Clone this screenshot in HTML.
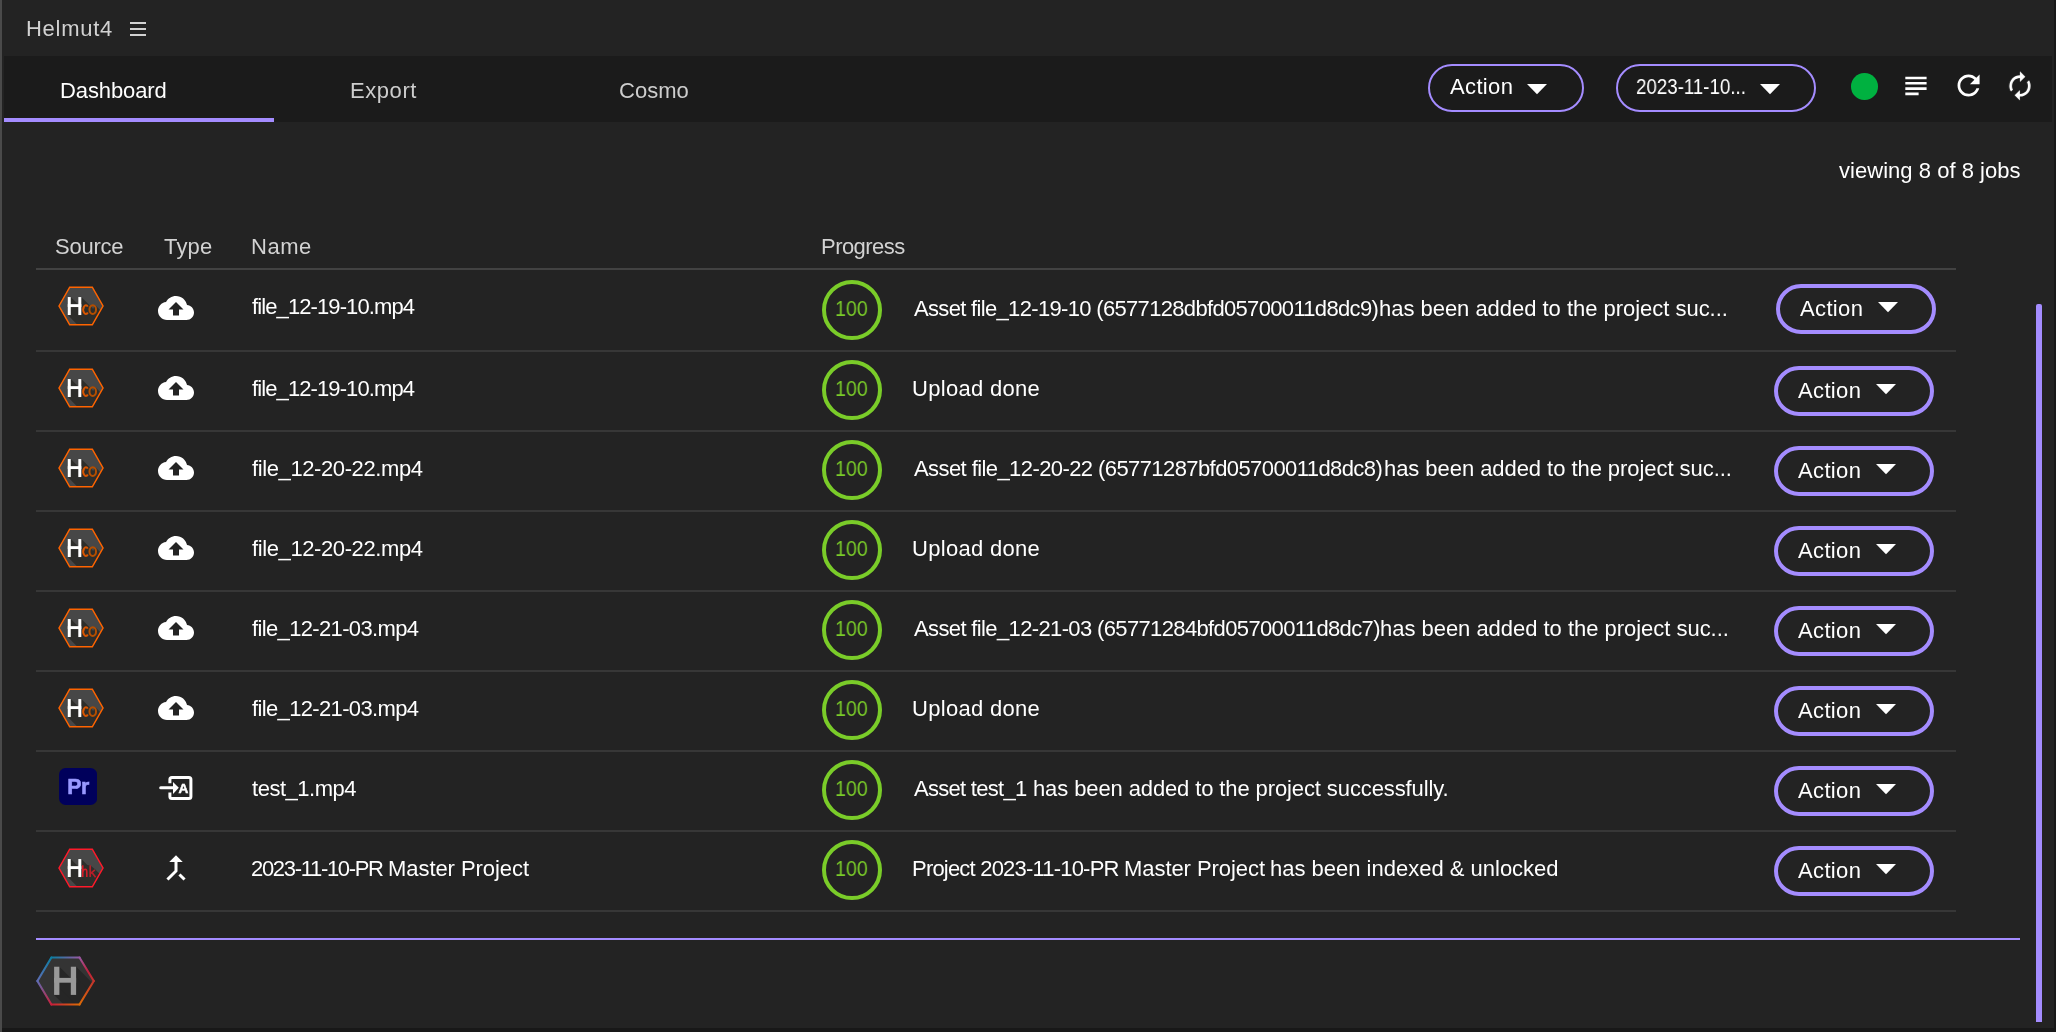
<!DOCTYPE html>
<html><head><meta charset="utf-8"><title>Helmut4</title>
<style>
html,body{margin:0;padding:0}
body{width:2056px;height:1032px;background:#232323;position:relative;overflow:hidden;font-family:"Liberation Sans",sans-serif}
.a{position:absolute;display:block;will-change:transform}
.t{position:absolute;white-space:nowrap;display:block;will-change:transform}
</style></head><body>

<div class="a" style="left:0;top:0;width:2px;height:1032px;background:#4a4a4a"></div>
<div class="a" style="left:2054px;top:0;width:2px;height:1032px;background:#181818"></div>
<div class="a" style="left:2px;top:1028px;width:2054px;height:4px;background:#181818"></div>
<span class="t" style="left:25.56px;top:18.38px;font-size:22px;line-height:22px;color:#d2d2d2;letter-spacing:0.722px;font-weight:normal;">Helmut4</span>
<div class="a" style="left:130px;top:22px;width:16px;height:2px;background:#d2d2d2"></div>
<div class="a" style="left:130px;top:28px;width:16px;height:2px;background:#d2d2d2"></div>
<div class="a" style="left:130px;top:34px;width:16px;height:2px;background:#d2d2d2"></div>
<div class="a" style="left:4px;top:56px;width:2048px;height:66px;background:#1b1b1b"></div>
<div class="a" style="left:4px;top:118px;width:270px;height:4px;background:#a48cff"></div>
<span class="t" style="left:60.22px;top:80.38px;font-size:22px;line-height:22px;color:#ffffff;letter-spacing:-0.106px;font-weight:normal;">Dashboard</span>
<span class="t" style="left:349.94px;top:80.38px;font-size:22px;line-height:22px;color:#cdcdcd;letter-spacing:0.564px;font-weight:normal;">Export</span>
<span class="t" style="left:618.57px;top:80.38px;font-size:22px;line-height:22px;color:#cdcdcd;letter-spacing:0.017px;font-weight:normal;">Cosmo</span>
<div class="a" style="left:1428px;top:64px;width:152px;height:44px;border:2px solid #a48cff;border-radius:24.0px;background:#1b1b1b"></div><span class="t" style="left:1450.2px;top:76.38px;font-size:22px;line-height:22px;color:#ffffff;letter-spacing:0.36px;font-weight:normal;">Action</span><svg class="a" style="left:1527px;top:84px" width="20" height="11" viewBox="0 0 20 11"><polygon points="0,0 20,0 10,10.3" fill="#fff"/></svg>
<div class="a" style="left:1616px;top:64px;width:196px;height:44px;border:2px solid #a48cff;border-radius:24.0px;background:#1b1b1b"></div><span class="t" style="left:1636px;top:76.38px;font-size:22px;line-height:22px;color:#ffffff;letter-spacing:0px;font-weight:normal;transform:scaleX(0.85);transform-origin:0 0;">2023-11-10...</span><svg class="a" style="left:1760px;top:84px" width="20" height="11" viewBox="0 0 20 11"><polygon points="0,0 20,0 10,10.3" fill="#fff"/></svg>
<div class="a" style="left:1850.7px;top:72.6px;width:26.6px;height:26.6px;border-radius:50%;background:#00b140"></div>
<svg class="a" style="left:1899.80px;top:69.85px;" width="31.92" height="31.92" viewBox="0 0 24 24"><path d="M14 17H4v2h10v-2zm6-8H4v2h16V9zM4 15h16v-2H4v2zM4 5v2h16V5H4z" fill="#fff"/></svg>
<svg class="a" style="left:1951.50px;top:69.40px;" width="33.12" height="33.12" viewBox="0 0 24 24"><path d="M17.65 6.35C16.2 4.9 14.21 4 12 4c-4.42 0-7.99 3.58-7.99 8s3.57 8 7.99 8c3.73 0 6.84-2.55 7.73-6h-2.08c-.82 2.33-3.04 4-5.65 4-3.31 0-6-2.69-6-6s2.69-6 6-6c1.66 0 3.14.69 4.22 1.78L13 11h7V4l-2.35 2.35z" fill="#fff"/></svg>
<svg class="a" style="left:2004.10px;top:69.90px;transform:scaleX(-1);" width="31.92" height="31.92" viewBox="0 0 24 24"><path d="M12 4V1L8 5l4 4V6c3.31 0 6 2.69 6 6 0 1.01-.25 1.97-.7 2.8l1.46 1.46C19.54 15.03 20 13.57 20 12c0-4.42-3.58-8-8-8zm0 14c-3.31 0-6-2.69-6-6 0-1.01.25-1.97.7-2.8L5.24 7.74C4.46 8.97 4 10.43 4 12c0 4.42 3.58 8 8 8v3l4-4-4-4v3z" fill="#fff"/></svg>
<span class="t" style="left:1838.57px;top:160.38px;font-size:22px;line-height:22px;color:#ffffff;letter-spacing:0.03px;font-weight:normal;">viewing 8 of 8 jobs</span>
<span class="t" style="left:54.88px;top:236.38px;font-size:22px;line-height:22px;color:#d2d2d2;letter-spacing:-0.244px;font-weight:normal;">Source</span>
<span class="t" style="left:163.65px;top:236.38px;font-size:22px;line-height:22px;color:#d2d2d2;letter-spacing:0.169px;font-weight:normal;">Type</span>
<span class="t" style="left:250.94px;top:236.38px;font-size:22px;line-height:22px;color:#d2d2d2;letter-spacing:0.542px;font-weight:normal;">Name</span>
<span class="t" style="left:821.17px;top:236.38px;font-size:22px;line-height:22px;color:#d2d2d2;letter-spacing:-0.542px;font-weight:normal;">Progress</span>
<div class="a" style="left:36px;top:268px;width:1920px;height:2px;background:#424242"></div>
<div class="a" style="left:36px;top:350px;width:1920px;height:2px;background:#373737"></div>
<svg class="a" style="left:50.95px;top:275.85px" width="60" height="60" viewBox="0 0 60 60">
<defs><clipPath id="c80_305"><polygon points="8.0,30 18.7,11.2 41.3,11.2 52.0,30 41.3,48.8 18.7,48.8"/></clipPath></defs>
<polygon points="8.0,30 18.7,11.2 41.3,11.2 52.0,30 41.3,48.8 18.7,48.8" fill="#474747"/>
<g clip-path="url(#c80_305)"><polygon points="16.75,21.05 19.75,21.05 99.75,101.05 96.75,119.05 16.75,39.05" fill="#2d2d2a"/><polygon points="27.3,21.05 30.3,21.05 110.3,101.05 107.3,119.05 27.3,39.05" fill="#2d2d2a"/><polygon points="16.75,28.15 30.3,28.15 110.3,108.15 96.75,111.05 16.75,31.05" fill="#2d2d2a"/><polygon points="44.41,29.32 104.41,89.32 99.09,97.88 39.09,37.88" fill="#2d2d2a"/></g>
<polygon points="8.0,30 18.7,11.2 41.3,11.2 52.0,30 41.3,48.8 18.7,48.8" fill="none" stroke="#ff6400" stroke-width="1.5" stroke-linejoin="miter"/>
<rect x="16.75" y="21.05" width="3.0" height="18" fill="#fff"/>
<rect x="27.3" y="21.05" width="3.0" height="18" fill="#fff"/>
<rect x="16.75" y="28.15" width="13.55" height="2.9" fill="#fff"/>
<path d="M36.83,30.62 A2.6,4.45 0 1 0 36.83,36.58" fill="none" stroke="#d85600" stroke-width="2"/><ellipse cx="41.75" cy="33.6" rx="3.3" ry="4.45" fill="none" stroke="#b44e00" stroke-width="2"/></svg>
<svg class="a" style="left:158.00px;top:290.00px;" width="36.00" height="36.00" viewBox="0 0 24 24"><path d="M19.35 10.04C18.67 6.59 15.64 4 12 4 9.11 4 6.6 5.64 5.35 8.04 2.34 8.36 0 10.91 0 14c0 3.31 2.69 6 6 6h13c2.76 0 5-2.24 5-5 0-2.64-2.05-4.78-4.65-4.96zM14 13v4h-4v-4H7l5-5 5 5h-3z" fill="#fff"/></svg>
<span class="t" style="left:252.19px;top:296.18px;font-size:22px;line-height:22px;color:#ffffff;letter-spacing:-0.894px;font-weight:normal;">file_12-19-10.mp4</span>
<span class="t" style="left:913.57px;top:298.38px;font-size:22px;line-height:22px;color:#ffffff;letter-spacing:-0.671px;font-weight:normal;">Asset file_12-19-10 (6577128dbfd05700011d8dc9)</span>
<span class="t" style="left:1379.11px;top:298.38px;font-size:22px;line-height:22px;color:#ffffff;letter-spacing:-0.026px;font-weight:normal;">has been added to the project suc...</span>
<div class="a" style="left:822px;top:280px;width:52px;height:52px;border:4px solid #7acc29;border-radius:50%"></div>
<span class="t" style="left:834.91px;top:298.38px;font-size:22px;line-height:22px;color:#7acc29;letter-spacing:0px;font-weight:normal;transform:scaleX(0.893);transform-origin:0 0;">100</span>
<div class="a" style="left:1776px;top:284px;width:152px;height:42px;border:4px solid #a48cff;border-radius:25.0px;background:transparent"></div><span class="t" style="left:1800.4px;top:298.48px;font-size:22px;line-height:22px;color:#ffffff;letter-spacing:0.36px;font-weight:normal;">Action</span><svg class="a" style="left:1877.5px;top:302px" width="20" height="11" viewBox="0 0 20 11"><polygon points="0,0 20,0 10,10.3" fill="#fff"/></svg>
<div class="a" style="left:36px;top:430px;width:1920px;height:2px;background:#373737"></div>
<svg class="a" style="left:50.95px;top:357.75px" width="60" height="60" viewBox="0 0 60 60">
<defs><clipPath id="c80_387"><polygon points="8.0,30 18.7,11.2 41.3,11.2 52.0,30 41.3,48.8 18.7,48.8"/></clipPath></defs>
<polygon points="8.0,30 18.7,11.2 41.3,11.2 52.0,30 41.3,48.8 18.7,48.8" fill="#474747"/>
<g clip-path="url(#c80_387)"><polygon points="16.75,21.05 19.75,21.05 99.75,101.05 96.75,119.05 16.75,39.05" fill="#2d2d2a"/><polygon points="27.3,21.05 30.3,21.05 110.3,101.05 107.3,119.05 27.3,39.05" fill="#2d2d2a"/><polygon points="16.75,28.15 30.3,28.15 110.3,108.15 96.75,111.05 16.75,31.05" fill="#2d2d2a"/><polygon points="44.41,29.32 104.41,89.32 99.09,97.88 39.09,37.88" fill="#2d2d2a"/></g>
<polygon points="8.0,30 18.7,11.2 41.3,11.2 52.0,30 41.3,48.8 18.7,48.8" fill="none" stroke="#ff6400" stroke-width="1.5" stroke-linejoin="miter"/>
<rect x="16.75" y="21.05" width="3.0" height="18" fill="#fff"/>
<rect x="27.3" y="21.05" width="3.0" height="18" fill="#fff"/>
<rect x="16.75" y="28.15" width="13.55" height="2.9" fill="#fff"/>
<path d="M36.83,30.62 A2.6,4.45 0 1 0 36.83,36.58" fill="none" stroke="#d85600" stroke-width="2"/><ellipse cx="41.75" cy="33.6" rx="3.3" ry="4.45" fill="none" stroke="#b44e00" stroke-width="2"/></svg>
<svg class="a" style="left:158.00px;top:370.00px;" width="36.00" height="36.00" viewBox="0 0 24 24"><path d="M19.35 10.04C18.67 6.59 15.64 4 12 4 9.11 4 6.6 5.64 5.35 8.04 2.34 8.36 0 10.91 0 14c0 3.31 2.69 6 6 6h13c2.76 0 5-2.24 5-5 0-2.64-2.05-4.78-4.65-4.96zM14 13v4h-4v-4H7l5-5 5 5h-3z" fill="#fff"/></svg>
<span class="t" style="left:252.19px;top:378.18px;font-size:22px;line-height:22px;color:#ffffff;letter-spacing:-0.894px;font-weight:normal;">file_12-19-10.mp4</span>
<span class="t" style="left:911.92px;top:378.38px;font-size:22px;line-height:22px;color:#ffffff;letter-spacing:0.307px;font-weight:normal;">Upload done</span>
<div class="a" style="left:822px;top:360px;width:52px;height:52px;border:4px solid #7acc29;border-radius:50%"></div>
<span class="t" style="left:834.91px;top:378.38px;font-size:22px;line-height:22px;color:#7acc29;letter-spacing:0px;font-weight:normal;transform:scaleX(0.893);transform-origin:0 0;">100</span>
<div class="a" style="left:1774px;top:366px;width:152px;height:42px;border:4px solid #a48cff;border-radius:25.0px;background:transparent"></div><span class="t" style="left:1798.4px;top:380.48px;font-size:22px;line-height:22px;color:#ffffff;letter-spacing:0.36px;font-weight:normal;">Action</span><svg class="a" style="left:1875.5px;top:384px" width="20" height="11" viewBox="0 0 20 11"><polygon points="0,0 20,0 10,10.3" fill="#fff"/></svg>
<div class="a" style="left:36px;top:510px;width:1920px;height:2px;background:#373737"></div>
<svg class="a" style="left:50.95px;top:437.75px" width="60" height="60" viewBox="0 0 60 60">
<defs><clipPath id="c80_467"><polygon points="8.0,30 18.7,11.2 41.3,11.2 52.0,30 41.3,48.8 18.7,48.8"/></clipPath></defs>
<polygon points="8.0,30 18.7,11.2 41.3,11.2 52.0,30 41.3,48.8 18.7,48.8" fill="#474747"/>
<g clip-path="url(#c80_467)"><polygon points="16.75,21.05 19.75,21.05 99.75,101.05 96.75,119.05 16.75,39.05" fill="#2d2d2a"/><polygon points="27.3,21.05 30.3,21.05 110.3,101.05 107.3,119.05 27.3,39.05" fill="#2d2d2a"/><polygon points="16.75,28.15 30.3,28.15 110.3,108.15 96.75,111.05 16.75,31.05" fill="#2d2d2a"/><polygon points="44.41,29.32 104.41,89.32 99.09,97.88 39.09,37.88" fill="#2d2d2a"/></g>
<polygon points="8.0,30 18.7,11.2 41.3,11.2 52.0,30 41.3,48.8 18.7,48.8" fill="none" stroke="#ff6400" stroke-width="1.5" stroke-linejoin="miter"/>
<rect x="16.75" y="21.05" width="3.0" height="18" fill="#fff"/>
<rect x="27.3" y="21.05" width="3.0" height="18" fill="#fff"/>
<rect x="16.75" y="28.15" width="13.55" height="2.9" fill="#fff"/>
<path d="M36.83,30.62 A2.6,4.45 0 1 0 36.83,36.58" fill="none" stroke="#d85600" stroke-width="2"/><ellipse cx="41.75" cy="33.6" rx="3.3" ry="4.45" fill="none" stroke="#b44e00" stroke-width="2"/></svg>
<svg class="a" style="left:158.00px;top:450.00px;" width="36.00" height="36.00" viewBox="0 0 24 24"><path d="M19.35 10.04C18.67 6.59 15.64 4 12 4 9.11 4 6.6 5.64 5.35 8.04 2.34 8.36 0 10.91 0 14c0 3.31 2.69 6 6 6h13c2.76 0 5-2.24 5-5 0-2.64-2.05-4.78-4.65-4.96zM14 13v4h-4v-4H7l5-5 5 5h-3z" fill="#fff"/></svg>
<span class="t" style="left:251.88px;top:458.18px;font-size:22px;line-height:22px;color:#ffffff;letter-spacing:-0.394px;font-weight:normal;">file_12-20-22.mp4</span>
<span class="t" style="left:913.57px;top:458.38px;font-size:22px;line-height:22px;color:#ffffff;letter-spacing:-0.583px;font-weight:normal;">Asset file_12-20-22 (65771287bfd05700011d8dc8)</span>
<span class="t" style="left:1383.88px;top:458.38px;font-size:22px;line-height:22px;color:#ffffff;letter-spacing:-0.055px;font-weight:normal;">has been added to the project suc...</span>
<div class="a" style="left:822px;top:440px;width:52px;height:52px;border:4px solid #7acc29;border-radius:50%"></div>
<span class="t" style="left:834.91px;top:458.38px;font-size:22px;line-height:22px;color:#7acc29;letter-spacing:0px;font-weight:normal;transform:scaleX(0.893);transform-origin:0 0;">100</span>
<div class="a" style="left:1774px;top:446px;width:152px;height:42px;border:4px solid #a48cff;border-radius:25.0px;background:transparent"></div><span class="t" style="left:1798.4px;top:460.48px;font-size:22px;line-height:22px;color:#ffffff;letter-spacing:0.36px;font-weight:normal;">Action</span><svg class="a" style="left:1875.5px;top:464px" width="20" height="11" viewBox="0 0 20 11"><polygon points="0,0 20,0 10,10.3" fill="#fff"/></svg>
<div class="a" style="left:36px;top:590px;width:1920px;height:2px;background:#373737"></div>
<svg class="a" style="left:50.95px;top:517.75px" width="60" height="60" viewBox="0 0 60 60">
<defs><clipPath id="c80_547"><polygon points="8.0,30 18.7,11.2 41.3,11.2 52.0,30 41.3,48.8 18.7,48.8"/></clipPath></defs>
<polygon points="8.0,30 18.7,11.2 41.3,11.2 52.0,30 41.3,48.8 18.7,48.8" fill="#474747"/>
<g clip-path="url(#c80_547)"><polygon points="16.75,21.05 19.75,21.05 99.75,101.05 96.75,119.05 16.75,39.05" fill="#2d2d2a"/><polygon points="27.3,21.05 30.3,21.05 110.3,101.05 107.3,119.05 27.3,39.05" fill="#2d2d2a"/><polygon points="16.75,28.15 30.3,28.15 110.3,108.15 96.75,111.05 16.75,31.05" fill="#2d2d2a"/><polygon points="44.41,29.32 104.41,89.32 99.09,97.88 39.09,37.88" fill="#2d2d2a"/></g>
<polygon points="8.0,30 18.7,11.2 41.3,11.2 52.0,30 41.3,48.8 18.7,48.8" fill="none" stroke="#ff6400" stroke-width="1.5" stroke-linejoin="miter"/>
<rect x="16.75" y="21.05" width="3.0" height="18" fill="#fff"/>
<rect x="27.3" y="21.05" width="3.0" height="18" fill="#fff"/>
<rect x="16.75" y="28.15" width="13.55" height="2.9" fill="#fff"/>
<path d="M36.83,30.62 A2.6,4.45 0 1 0 36.83,36.58" fill="none" stroke="#d85600" stroke-width="2"/><ellipse cx="41.75" cy="33.6" rx="3.3" ry="4.45" fill="none" stroke="#b44e00" stroke-width="2"/></svg>
<svg class="a" style="left:158.00px;top:530.00px;" width="36.00" height="36.00" viewBox="0 0 24 24"><path d="M19.35 10.04C18.67 6.59 15.64 4 12 4 9.11 4 6.6 5.64 5.35 8.04 2.34 8.36 0 10.91 0 14c0 3.31 2.69 6 6 6h13c2.76 0 5-2.24 5-5 0-2.64-2.05-4.78-4.65-4.96zM14 13v4h-4v-4H7l5-5 5 5h-3z" fill="#fff"/></svg>
<span class="t" style="left:251.88px;top:538.18px;font-size:22px;line-height:22px;color:#ffffff;letter-spacing:-0.394px;font-weight:normal;">file_12-20-22.mp4</span>
<span class="t" style="left:911.92px;top:538.38px;font-size:22px;line-height:22px;color:#ffffff;letter-spacing:0.307px;font-weight:normal;">Upload done</span>
<div class="a" style="left:822px;top:520px;width:52px;height:52px;border:4px solid #7acc29;border-radius:50%"></div>
<span class="t" style="left:834.91px;top:538.38px;font-size:22px;line-height:22px;color:#7acc29;letter-spacing:0px;font-weight:normal;transform:scaleX(0.893);transform-origin:0 0;">100</span>
<div class="a" style="left:1774px;top:526px;width:152px;height:42px;border:4px solid #a48cff;border-radius:25.0px;background:transparent"></div><span class="t" style="left:1798.4px;top:540.48px;font-size:22px;line-height:22px;color:#ffffff;letter-spacing:0.36px;font-weight:normal;">Action</span><svg class="a" style="left:1875.5px;top:544px" width="20" height="11" viewBox="0 0 20 11"><polygon points="0,0 20,0 10,10.3" fill="#fff"/></svg>
<div class="a" style="left:36px;top:670px;width:1920px;height:2px;background:#373737"></div>
<svg class="a" style="left:50.95px;top:597.75px" width="60" height="60" viewBox="0 0 60 60">
<defs><clipPath id="c80_627"><polygon points="8.0,30 18.7,11.2 41.3,11.2 52.0,30 41.3,48.8 18.7,48.8"/></clipPath></defs>
<polygon points="8.0,30 18.7,11.2 41.3,11.2 52.0,30 41.3,48.8 18.7,48.8" fill="#474747"/>
<g clip-path="url(#c80_627)"><polygon points="16.75,21.05 19.75,21.05 99.75,101.05 96.75,119.05 16.75,39.05" fill="#2d2d2a"/><polygon points="27.3,21.05 30.3,21.05 110.3,101.05 107.3,119.05 27.3,39.05" fill="#2d2d2a"/><polygon points="16.75,28.15 30.3,28.15 110.3,108.15 96.75,111.05 16.75,31.05" fill="#2d2d2a"/><polygon points="44.41,29.32 104.41,89.32 99.09,97.88 39.09,37.88" fill="#2d2d2a"/></g>
<polygon points="8.0,30 18.7,11.2 41.3,11.2 52.0,30 41.3,48.8 18.7,48.8" fill="none" stroke="#ff6400" stroke-width="1.5" stroke-linejoin="miter"/>
<rect x="16.75" y="21.05" width="3.0" height="18" fill="#fff"/>
<rect x="27.3" y="21.05" width="3.0" height="18" fill="#fff"/>
<rect x="16.75" y="28.15" width="13.55" height="2.9" fill="#fff"/>
<path d="M36.83,30.62 A2.6,4.45 0 1 0 36.83,36.58" fill="none" stroke="#d85600" stroke-width="2"/><ellipse cx="41.75" cy="33.6" rx="3.3" ry="4.45" fill="none" stroke="#b44e00" stroke-width="2"/></svg>
<svg class="a" style="left:158.00px;top:610.00px;" width="36.00" height="36.00" viewBox="0 0 24 24"><path d="M19.35 10.04C18.67 6.59 15.64 4 12 4 9.11 4 6.6 5.64 5.35 8.04 2.34 8.36 0 10.91 0 14c0 3.31 2.69 6 6 6h13c2.76 0 5-2.24 5-5 0-2.64-2.05-4.78-4.65-4.96zM14 13v4h-4v-4H7l5-5 5 5h-3z" fill="#fff"/></svg>
<span class="t" style="left:252.19px;top:618.18px;font-size:22px;line-height:22px;color:#ffffff;letter-spacing:-0.644px;font-weight:normal;">file_12-21-03.mp4</span>
<span class="t" style="left:913.57px;top:618.38px;font-size:22px;line-height:22px;color:#ffffff;letter-spacing:-0.633px;font-weight:normal;">Asset file_12-21-03 (65771284bfd05700011d8dc7)</span>
<span class="t" style="left:1380.26px;top:618.38px;font-size:22px;line-height:22px;color:#ffffff;letter-spacing:-0.026px;font-weight:normal;">has been added to the project suc...</span>
<div class="a" style="left:822px;top:600px;width:52px;height:52px;border:4px solid #7acc29;border-radius:50%"></div>
<span class="t" style="left:834.91px;top:618.38px;font-size:22px;line-height:22px;color:#7acc29;letter-spacing:0px;font-weight:normal;transform:scaleX(0.893);transform-origin:0 0;">100</span>
<div class="a" style="left:1774px;top:606px;width:152px;height:42px;border:4px solid #a48cff;border-radius:25.0px;background:transparent"></div><span class="t" style="left:1798.4px;top:620.48px;font-size:22px;line-height:22px;color:#ffffff;letter-spacing:0.36px;font-weight:normal;">Action</span><svg class="a" style="left:1875.5px;top:624px" width="20" height="11" viewBox="0 0 20 11"><polygon points="0,0 20,0 10,10.3" fill="#fff"/></svg>
<div class="a" style="left:36px;top:750px;width:1920px;height:2px;background:#373737"></div>
<svg class="a" style="left:50.95px;top:677.75px" width="60" height="60" viewBox="0 0 60 60">
<defs><clipPath id="c80_707"><polygon points="8.0,30 18.7,11.2 41.3,11.2 52.0,30 41.3,48.8 18.7,48.8"/></clipPath></defs>
<polygon points="8.0,30 18.7,11.2 41.3,11.2 52.0,30 41.3,48.8 18.7,48.8" fill="#474747"/>
<g clip-path="url(#c80_707)"><polygon points="16.75,21.05 19.75,21.05 99.75,101.05 96.75,119.05 16.75,39.05" fill="#2d2d2a"/><polygon points="27.3,21.05 30.3,21.05 110.3,101.05 107.3,119.05 27.3,39.05" fill="#2d2d2a"/><polygon points="16.75,28.15 30.3,28.15 110.3,108.15 96.75,111.05 16.75,31.05" fill="#2d2d2a"/><polygon points="44.41,29.32 104.41,89.32 99.09,97.88 39.09,37.88" fill="#2d2d2a"/></g>
<polygon points="8.0,30 18.7,11.2 41.3,11.2 52.0,30 41.3,48.8 18.7,48.8" fill="none" stroke="#ff6400" stroke-width="1.5" stroke-linejoin="miter"/>
<rect x="16.75" y="21.05" width="3.0" height="18" fill="#fff"/>
<rect x="27.3" y="21.05" width="3.0" height="18" fill="#fff"/>
<rect x="16.75" y="28.15" width="13.55" height="2.9" fill="#fff"/>
<path d="M36.83,30.62 A2.6,4.45 0 1 0 36.83,36.58" fill="none" stroke="#d85600" stroke-width="2"/><ellipse cx="41.75" cy="33.6" rx="3.3" ry="4.45" fill="none" stroke="#b44e00" stroke-width="2"/></svg>
<svg class="a" style="left:158.00px;top:690.00px;" width="36.00" height="36.00" viewBox="0 0 24 24"><path d="M19.35 10.04C18.67 6.59 15.64 4 12 4 9.11 4 6.6 5.64 5.35 8.04 2.34 8.36 0 10.91 0 14c0 3.31 2.69 6 6 6h13c2.76 0 5-2.24 5-5 0-2.64-2.05-4.78-4.65-4.96zM14 13v4h-4v-4H7l5-5 5 5h-3z" fill="#fff"/></svg>
<span class="t" style="left:252.19px;top:698.18px;font-size:22px;line-height:22px;color:#ffffff;letter-spacing:-0.644px;font-weight:normal;">file_12-21-03.mp4</span>
<span class="t" style="left:911.92px;top:698.38px;font-size:22px;line-height:22px;color:#ffffff;letter-spacing:0.307px;font-weight:normal;">Upload done</span>
<div class="a" style="left:822px;top:680px;width:52px;height:52px;border:4px solid #7acc29;border-radius:50%"></div>
<span class="t" style="left:834.91px;top:698.38px;font-size:22px;line-height:22px;color:#7acc29;letter-spacing:0px;font-weight:normal;transform:scaleX(0.893);transform-origin:0 0;">100</span>
<div class="a" style="left:1774px;top:686px;width:152px;height:42px;border:4px solid #a48cff;border-radius:25.0px;background:transparent"></div><span class="t" style="left:1798.4px;top:700.48px;font-size:22px;line-height:22px;color:#ffffff;letter-spacing:0.36px;font-weight:normal;">Action</span><svg class="a" style="left:1875.5px;top:704px" width="20" height="11" viewBox="0 0 20 11"><polygon points="0,0 20,0 10,10.3" fill="#fff"/></svg>
<div class="a" style="left:36px;top:830px;width:1920px;height:2px;background:#373737"></div>
<svg class="a" style="left:59px;top:768.4px" width="38.1" height="37" viewBox="0 0 38.1 37"><rect x="0" y="0" width="38.1" height="37" rx="6.5" fill="#00005b"/><text x="0" y="0" transform="translate(8.2,25.6) scale(0.93,1)" font-family="Liberation Sans" font-weight="bold" font-size="23" fill="#9999ff" stroke="#9999ff" stroke-width="0.6" letter-spacing="-0.4">Pr</text></svg>
<svg class="a" style="left:150px;top:765px" width="50" height="50" viewBox="0 0 50 50">
<path d="M19.9 18.2 V14.4 Q19.9 12.4 21.9 12.4 H38.9 Q40.9 12.4 40.9 14.4 V31.4 Q40.9 33.4 38.9 33.4 H21.9 Q19.9 33.4 19.9 31.4 V27.6" fill="none" stroke="#fff" stroke-width="3"/>
<line x1="10.7" y1="22.8" x2="24" y2="22.8" stroke="#fff" stroke-width="3" stroke-linecap="round"/>
<polygon points="23,17 28.8,22.8 23,29.1" fill="#fff"/>
<text x="28.4" y="27.9" font-family="Liberation Sans" font-weight="bold" font-size="13.6" fill="#fff" stroke="#fff" stroke-width="0.5">A</text>
</svg>
<span class="t" style="left:252.19px;top:778.18px;font-size:22px;line-height:22px;color:#ffffff;letter-spacing:-0.474px;font-weight:normal;">test_1.mp4</span>
<span class="t" style="left:913.57px;top:778.38px;font-size:22px;line-height:22px;color:#ffffff;letter-spacing:-0.713px;font-weight:normal;">Asset test_1</span>
<span class="t" style="left:1032.65px;top:778.38px;font-size:22px;line-height:22px;color:#ffffff;letter-spacing:-0.112px;font-weight:normal;">has been added to the project successfully.</span>
<div class="a" style="left:822px;top:760px;width:52px;height:52px;border:4px solid #7acc29;border-radius:50%"></div>
<span class="t" style="left:834.91px;top:778.38px;font-size:22px;line-height:22px;color:#7acc29;letter-spacing:0px;font-weight:normal;transform:scaleX(0.893);transform-origin:0 0;">100</span>
<div class="a" style="left:1774px;top:766px;width:152px;height:42px;border:4px solid #a48cff;border-radius:25.0px;background:transparent"></div><span class="t" style="left:1798.4px;top:780.48px;font-size:22px;line-height:22px;color:#ffffff;letter-spacing:0.36px;font-weight:normal;">Action</span><svg class="a" style="left:1875.5px;top:784px" width="20" height="11" viewBox="0 0 20 11"><polygon points="0,0 20,0 10,10.3" fill="#fff"/></svg>
<div class="a" style="left:36px;top:910px;width:1920px;height:2px;background:#373737"></div>
<svg class="a" style="left:50.95px;top:837.75px" width="60" height="60" viewBox="0 0 60 60">
<defs><clipPath id="c80_867"><polygon points="8.0,30 18.7,11.2 41.3,11.2 52.0,30 41.3,48.8 18.7,48.8"/></clipPath></defs>
<polygon points="8.0,30 18.7,11.2 41.3,11.2 52.0,30 41.3,48.8 18.7,48.8" fill="#474747"/>
<g clip-path="url(#c80_867)"><polygon points="16.75,21.05 19.75,21.05 99.75,101.05 96.75,119.05 16.75,39.05" fill="#2d2d2a"/><polygon points="27.3,21.05 30.3,21.05 110.3,101.05 107.3,119.05 27.3,39.05" fill="#2d2d2a"/><polygon points="16.75,28.15 30.3,28.15 110.3,108.15 96.75,111.05 16.75,31.05" fill="#2d2d2a"/><polygon points="31.0,27.3 39.2,27.3 44.2,31.5 104.2,91.5 91.0,99.0 31.0,39.0" fill="#2d2d2a"/></g>
<polygon points="8.0,30 18.7,11.2 41.3,11.2 52.0,30 41.3,48.8 18.7,48.8" fill="none" stroke="#ff1a2a" stroke-width="1.5" stroke-linejoin="miter"/>
<rect x="16.75" y="21.05" width="3.0" height="18" fill="#fff"/>
<rect x="27.3" y="21.05" width="3.0" height="18" fill="#fff"/>
<rect x="16.75" y="28.15" width="13.55" height="2.9" fill="#fff"/>
<path d="M31.75,27.3 V39.0 M31.75,34.3 Q32.4,31.2 34.2,31.2 Q35.8,31.2 35.8,33.8 V39.0" fill="none" stroke="#d21c28" stroke-width="1.6"/><path d="M39.2,27.3 V39.0 M43.9,31.8 L39.4,35.6 M40.9,34.4 L44.6,39.2" fill="none" stroke="#b81e28" stroke-width="1.7"/></svg>
<svg class="a" style="left:158.10px;top:850.00px;" width="36.00" height="36.00" viewBox="0 0 24 24"><path d="M17 20.41L18.41 19 15 15.59 13.59 17 17 20.41zM7.5 8H11v5.59L5.59 19 7 20.41l6-6V8h3.5L12 3.5 7.5 8z" fill="#fff"/></svg>
<span class="t" style="left:251.19px;top:858.18px;font-size:22px;line-height:22px;color:#ffffff;letter-spacing:-1.316px;font-weight:normal;">2023-11-10-PR</span>
<span class="t" style="left:387.84px;top:858.18px;font-size:22px;line-height:22px;color:#ffffff;letter-spacing:-0.061px;font-weight:normal;">Master Project</span>
<span class="t" style="left:912.38px;top:858.38px;font-size:22px;line-height:22px;color:#ffffff;letter-spacing:-0.798px;font-weight:normal;">Project 2023-11-10-PR</span>
<span class="t" style="left:1123.61px;top:858.38px;font-size:22px;line-height:22px;color:#ffffff;letter-spacing:-0.061px;font-weight:normal;">Master Project</span>
<span class="t" style="left:1270.19px;top:858.38px;font-size:22px;line-height:22px;color:#ffffff;letter-spacing:-0.003px;font-weight:normal;">has been indexed &amp; unlocked</span>
<div class="a" style="left:822px;top:840px;width:52px;height:52px;border:4px solid #7acc29;border-radius:50%"></div>
<span class="t" style="left:834.91px;top:858.38px;font-size:22px;line-height:22px;color:#7acc29;letter-spacing:0px;font-weight:normal;transform:scaleX(0.893);transform-origin:0 0;">100</span>
<div class="a" style="left:1774px;top:846px;width:152px;height:42px;border:4px solid #a48cff;border-radius:25.0px;background:transparent"></div><span class="t" style="left:1798.4px;top:860.48px;font-size:22px;line-height:22px;color:#ffffff;letter-spacing:0.36px;font-weight:normal;">Action</span><svg class="a" style="left:1875.5px;top:864px" width="20" height="11" viewBox="0 0 20 11"><polygon points="0,0 20,0 10,10.3" fill="#fff"/></svg>
<div class="a" style="left:36px;top:938px;width:1984px;height:2px;background:#a48cff"></div>
<svg class="a" style="left:30px;top:945px" width="70" height="70" viewBox="0 0 70 70">
<defs><linearGradient id="eg0" gradientUnits="userSpaceOnUse" x1="7.4" y1="36" x2="21.4" y2="12.5"><stop offset="0" stop-color="#5f6cb4"/><stop offset="1" stop-color="#0b7ea2"/></linearGradient><linearGradient id="eg1" gradientUnits="userSpaceOnUse" x1="21.4" y1="12.5" x2="49.5" y2="12.5"><stop offset="0" stop-color="#0b7ea2"/><stop offset="1" stop-color="#9659a2"/></linearGradient><linearGradient id="eg2" gradientUnits="userSpaceOnUse" x1="49.5" y1="12.5" x2="63.8" y2="36"><stop offset="0" stop-color="#9659a2"/><stop offset="0.6" stop-color="#c21f3c"/><stop offset="1" stop-color="#c2332c"/></linearGradient><linearGradient id="eg3" gradientUnits="userSpaceOnUse" x1="63.8" y1="36" x2="49.5" y2="59.5"><stop offset="0" stop-color="#c2332c"/><stop offset="1" stop-color="#dc6a06"/></linearGradient><linearGradient id="eg4" gradientUnits="userSpaceOnUse" x1="49.5" y1="59.5" x2="21.4" y2="59.5"><stop offset="0" stop-color="#dc6a06"/><stop offset="1" stop-color="#c81f3a"/></linearGradient><linearGradient id="eg5" gradientUnits="userSpaceOnUse" x1="21.4" y1="59.5" x2="7.4" y2="36"><stop offset="0" stop-color="#c81f3a"/><stop offset="1" stop-color="#5f6cb4"/></linearGradient>
<clipPath id="hexb"><polygon points="7.4,36 21.4,12.5 49.5,12.5 63.8,36 49.5,59.5 21.4,59.5"/></clipPath>
</defs>
<polygon points="7.4,36 21.4,12.5 49.5,12.5 63.8,36 49.5,59.5 21.4,59.5" fill="#343434"/>
<g clip-path="url(#hexb)"><polygon points="24.1,21.7 29.4,21.7 109.4,101.7 104.1,129.9 24.1,49.9" fill="#262626"/><polygon points="40.8,21.7 46.1,21.7 126.1,101.7 120.8,129.9 40.8,49.9" fill="#262626"/><polygon points="24.1,32.9 46.1,32.9 126.1,112.9 104.1,117.7 24.1,37.7" fill="#262626"/></g>
<line x1="7.4" y1="36" x2="21.4" y2="12.5" stroke="url(#eg0)" stroke-width="2.1" stroke-linecap="round"/><line x1="21.4" y1="12.5" x2="49.5" y2="12.5" stroke="url(#eg1)" stroke-width="2.1" stroke-linecap="round"/><line x1="49.5" y1="12.5" x2="63.8" y2="36" stroke="url(#eg2)" stroke-width="2.1" stroke-linecap="round"/><line x1="63.8" y1="36" x2="49.5" y2="59.5" stroke="url(#eg3)" stroke-width="2.1" stroke-linecap="round"/><line x1="49.5" y1="59.5" x2="21.4" y2="59.5" stroke="url(#eg4)" stroke-width="2.1" stroke-linecap="round"/><line x1="21.4" y1="59.5" x2="7.4" y2="36" stroke="url(#eg5)" stroke-width="2.1" stroke-linecap="round"/>
<rect x="24.1" y="21.7" width="5.3" height="28.2" fill="#999"/>
<rect x="40.8" y="21.7" width="5.3" height="28.2" fill="#999"/>
<rect x="24.1" y="32.9" width="22" height="4.8" fill="#999"/>
</svg>
<div class="a" style="left:2036px;top:304px;width:6px;height:718px;background:#a48cff;border-radius:2px 2px 0 0"></div>
</body></html>
